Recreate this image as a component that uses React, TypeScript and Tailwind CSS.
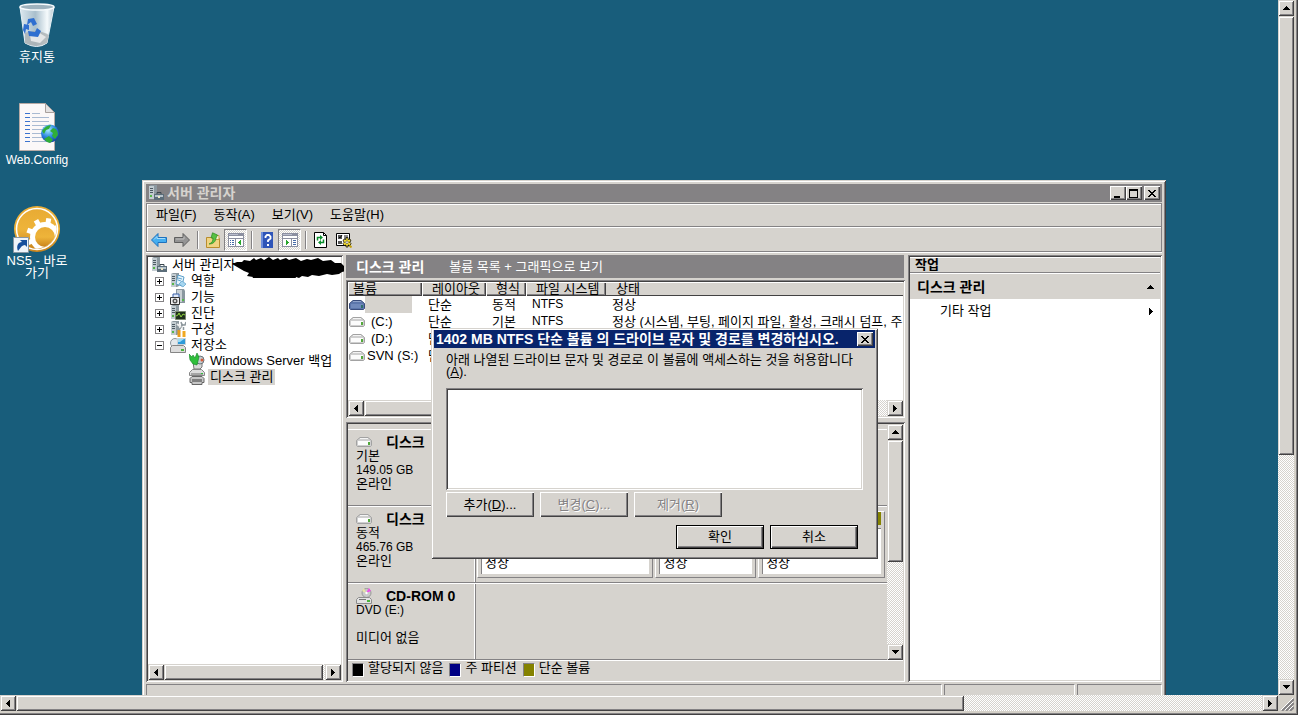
import type { ReactNode } from 'react';
import clsx from 'clsx';

const raised =
  'bg-[#d6d3ce] shadow-[inset_1px_1px_0_#d6d3ce,inset_-1px_-1px_0_#424142,inset_2px_2px_0_#fff,inset_-2px_-2px_0_#848284]';
const raisedButton =
  'bg-[#d6d3ce] shadow-[inset_1px_1px_0_#fff,inset_-1px_-1px_0_#424142,inset_-2px_-2px_0_#848284]';
const sunken =
  'p-[2px] shadow-[inset_1px_1px_0_#848284,inset_-1px_-1px_0_#fff,inset_2px_2px_0_#424142,inset_-2px_-2px_0_#d6d3ce]';
const dither =
  'bg-[repeating-conic-gradient(#fff_0_25%,#d6d3ce_0_50%)] bg-[length:2px_2px]';
const thinInset = 'border border-t-[#848284] border-l-[#848284] border-r-white border-b-white';

type Direction = 'up' | 'down' | 'left' | 'right';

const arrowPaths: Record<Direction, string> = {
  up: 'M3 0h1v1h1v1h1v1h1v1H0V3h1V2h1V1h1z',
  down: 'M0 0h7v1H6v1H5v1H4v1H3V3H2V2H1V1H0z',
  left: 'M4 0v7H3V6H2V5H1V4H0V3h1V2h1V1h1V0z',
  right: 'M0 0h1v1h1v1h1v1h1v1H3v1H2v1H1v1H0z'
};

const Arrow = ({ direction }: { direction: Direction }) => {
  const vertical = direction === 'up' || direction === 'down';
  return (
    <svg
      width={vertical ? 7 : 4}
      height={vertical ? 4 : 7}
      shapeRendering="crispEdges"
      aria-hidden="true"
    >
      <path d={arrowPaths[direction]} />
    </svg>
  );
};

const ScrollButton = ({ direction }: { direction: Direction }) => (
  <button
    type="button"
    aria-label={direction}
    className={clsx('flex size-4 shrink-0 items-center justify-center', raised)}
  >
    <Arrow direction={direction} />
  </button>
);

/* ---------- icons ---------- */

const Icon = ({ children, size = 16 }: { children: ReactNode; size?: number }) => (
  <svg width={size} height={size} viewBox="0 0 16 16" className="shrink-0" aria-hidden="true">
    {children}
  </svg>
);

const towerShape = (
  <>
    <path d="M1 1l2-1h6v13l-2 1H1z" fill="#8d99a0" />
    <path d="M1 1h5v13H1z" fill="#c3ccd1" />
    <path d="M2 3.500h3M2 5.500h3M2 7.500h3" stroke="#4d5a62" />
    <path d="M2 10h2v2H2z" fill="#55b848" />
  </>
);

const ServerIcon = () => (
  <Icon>
    {towerShape}
    <path d="M9 9.500v-2h4v2" fill="none" stroke="#39464e" />
    <path d="M6 9h10v6H6z" fill="#5b6d79" />
    <path d="M7 10h8v2H7z" fill="#b7c4cc" />
    <path d="M10 11h2v2h-2z" fill="#efe8c8" />
  </Icon>
);

const RolesIcon = () => (
  <Icon>
    {towerShape}
    <path d="M8 2l6 2-2 9-6-2z" fill="#e6f4fc" stroke="#5c9fc9" />
    <path d="M12 8l4 3-3 3-4-3z" fill="#a6d6f0" stroke="#5c9fc9" strokeWidth=".7" />
    <path d="M8 5l4 1M8 7l3 1" stroke="#62a5cf" />
  </Icon>
);

const FeaturesIcon = () => (
  <Icon>
    <path d="M6 0h8l1 2v12H6z" fill="#8a979f" />
    <path d="M7 1h5v12H7z" fill="#c9d0d4" />
    <path d="M3 5h6v6H3z" fill="#dfe9f8" stroke="#3860a8" />
    <path d="M.5 8.500h9v7h-9z" fill="#efefef" stroke="#333" />
    <circle cx="5" cy="12" r="2.500" fill="#555" />
    <circle cx="5" cy="12" r="1" fill="#fff" />
    <path d="M12 10h2v2h-2z" fill="#55b848" />
  </Icon>
);

const DiagnosticsIcon = () => (
  <Icon>
    {towerShape}
    <path d="M5.500 6.500h10v8h-10z" fill="#20301c" stroke="#7c8a70" />
    <path d="M6 11l2-1 1-2 2 4 2-3 2 1" fill="none" stroke="#8fd43c" />
  </Icon>
);

const ConfigIcon = () => (
  <Icon>
    {towerShape}
    <path d="M9 16V9" stroke="#e79a1c" strokeWidth="3" />
    <path d="M14 16v-6" stroke="#f0a821" strokeWidth="3" />
    <path d="M9 9L13 3M13.500 9V6" stroke="#8d979c" strokeWidth="1.500" />
    <path d="M11 1l1 3h3l1-3" fill="none" stroke="#8d979c" strokeWidth="1.500" />
    <path d="M7 3l4 3" stroke="#eee" strokeWidth="2" />
  </Icon>
);

const StorageIcon = () => (
  <Icon>
    <circle cx="5" cy="6" r="4.500" fill="#e4e8eb" stroke="#8a949b" />
    <path d="M7.500 1.500h8v6h-8z" fill="#2f9ad8" stroke="#c8d2d8" />
    <path d="M8 2h6l-4 3H8z" fill="#9adcf8" />
    <path d="M.5 10.500l2-2h11l2 2v5H.5z" fill="#dcdcdc" stroke="#858585" />
    <path d="M11 12h3v2h-3z" fill="#4bb53c" />
  </Icon>
);

const BackupIcon = () => (
  <Icon>
    <path d="M4 9h9v5l-2 2H5z" fill="#d9d9d9" stroke="#777" />
    <circle cx="11" cy="7" r="4" fill="#c4ccd0" stroke="#6b757b" />
    <circle cx="13" cy="7" r="1.500" fill="#d65a38" />
    <path d="M0 1l3 3 1-2 2 3 2-5 2 4-2 8-4-1-3-4z" fill="#2fbf3b" stroke="#128524" strokeWidth=".6" />
  </Icon>
);

const DiskMgmtIcon = () => (
  <Icon>
    <path d="M3.500.5h9l3 3v3H.5v-3z" fill="#dcdcdc" stroke="#858585" />
    <path d="M2 4h12v2H2z" fill="#a5a5a5" />
    <path d="M1 9.500l2-2h10l2 2v4h-2v2H3v-2H1z" fill="#c7c7c7" stroke="#666" />
    <path d="M3 10h10v3H3z" fill="#808080" />
    <path d="M12 4h2v1h-2z" fill="#2fbf3b" />
  </Icon>
);

const DriveIcon = ({ selected = false }: { selected?: boolean }) => (
  <svg width="16" height="10" viewBox="0 0 16 10" className="shrink-0" aria-hidden="true">
    <path
      d="M4 .5h8l3.500 3v5l-1 1h-13l-1-1v-5z"
      fill={selected ? '#5c76ab' : '#cfcfcf'}
      stroke={selected ? '#3a4d7d' : '#a2a2a2'}
    />
    <path d="M2 4h12v4H2z" fill={selected ? '#7089bb' : '#fcfcfc'} />
    <path d="M4 1.500h8" stroke={selected ? '#8fa3cb' : '#f4f4f4'} />
    <path d="M12 5h2v3h-2z" fill={selected ? '#2f6f6c' : '#52a83a'} />
  </svg>
);

const CdRomIcon = () => (
  <Icon>
    <circle cx="10.500" cy="5" r="4.500" fill="#c9c9c9" stroke="#999" />
    <path d="M10 5l3-5 2 3z" fill="#f04fe8" />
    <path d="M10 5L6 3l2-3z" fill="#e9e4a8" />
    <circle cx="10.500" cy="5" r="1.200" fill="#fff" />
    <path d="M.5 11.500l2-2h11l2 2v4H.5z" fill="#e2e2e2" stroke="#8c8c8c" />
    <path d="M3 11.500h7" stroke="#777" />
    <path d="M11 12h3v2h-3z" fill="#4bb53c" />
  </Icon>
);

const BackIcon = () => (
  <Icon>
    <path d="M.5 8L7 1.500v4h8.500v5H7v4z" fill="#45aef0" stroke="#1e71bd" />
    <path d="M3 7.500L6 4.500v2h8" fill="none" stroke="#a5dcfa" />
  </Icon>
);

const ForwardIcon = () => (
  <Icon>
    <path d="M15.500 8L9 1.500v4H.5v5H9v4z" fill="#949494" stroke="#5f5f5f" />
    <path d="M2 7h8V4.500" fill="none" stroke="#bdbdbd" />
  </Icon>
);

const FolderUpIcon = () => (
  <Icon>
    <path d="M1.500 5.500h5l1 1h7v9h-13z" fill="#f0d382" stroke="#b98d2d" />
    <path d="M9 3.500h5v4H9z" fill="#fbf2cf" stroke="#c9a24d" />
    <path d="M4 12c3-1 4-3 4-6H6L7.500.8l5 2.200L11 6c-.5 4-3 6-7 6z" fill="#58c044" stroke="#2b8a20" strokeWidth=".7" />
  </Icon>
);

const PaneIcon = ({ direction }: { direction: 'left' | 'right' }) => (
  <svg width="16" height="14" viewBox="0 0 16 14" shapeRendering="crispEdges" aria-hidden="true">
    <path d="M0 0h16v14H0z" fill="#8b8fa0" />
    <path d="M1 3h14v2H1zM1 6h14v7H1z" fill="#fff" />
    <path d="M1 1h9v1H1z" fill="#b9bdcd" />
    {direction === 'left' ? (
      <>
        <path d="M7 6h1v7H7z" fill="#8b8fa0" />
        <path d="M2 7h1v1H2zM4 7h2v1H4zM2 9h1v1H2zM4 9h2v1H4zM2 11h1v1H2zM4 11h2v1H4z" fill="#466ba8" />
        <path d="M13 7v5h-1v-1h-1v-1h-1V9h1V8h1V7z" fill="#28a52c" />
      </>
    ) : (
      <>
        <path d="M9 6h1v7H9z" fill="#8b8fa0" />
        <path d="M11 7h3v1h-3zM11 9h3v1h-3zM11 11h3v1h-3z" fill="#466ba8" />
        <path d="M4 7v5h1v-1h1v-1h1V9H6V8H5V7z" fill="#28a52c" />
      </>
    )}
  </svg>
);

const HelpIcon = () => (
  <Icon>
    <path d="M2 0h12v16H2z" fill="#2f55b8" />
    <path d="M2 0h2v16H2z" fill="#6d8ddb" />
    <path d="M6.500 6V4.500L8 3h2l1.500 1.500v2L9 8.500V10" fill="none" stroke="#fff" strokeWidth="1.800" />
    <path d="M8 12h2v2H8z" fill="#fff" />
  </Icon>
);

const RefreshIcon = () => (
  <Icon>
    <path d="M1.500.5h9l3 3v12h-12z" fill="#fff" stroke="#000" />
    <path d="M10.500.5v3h3" fill="none" stroke="#000" />
    <path d="M4.500 8.500v-3h3M10.500 7.500v3h-3" fill="none" stroke="#0a8f2c" strokeWidth="1.500" />
    <path d="M7 3l3 2.500L7 8zM8 8v5l-3-2.500z" fill="#0a8f2c" />
  </Icon>
);

const PropertiesIcon = () => (
  <Icon>
    <path d="M.5 1.500h13v12H.5z" fill="#fff" stroke="#000" />
    <path d="M2 3h4v4H2zM2 9h4v3H2z" fill="#555" />
    <path d="M3 5l1 1 2-3M8 4h4M8 6h4" fill="none" stroke="#111" />
    <path d="M10 5.500h2v2l2-.5 1 2-1.500 1L15 11.500l-1 2-2-.5v2h-2v-2l-2 .5-1-2L8.500 10 7 9l1-2 2 .5z" fill="#f4dc2e" stroke="#111" strokeWidth=".8" />
    <circle cx="11" cy="10.200" r="1.300" fill="#fff" stroke="#333" strokeWidth=".6" />
    <path d="M13.500 13.500l2 2" stroke="#c4a212" strokeWidth="2" />
  </Icon>
);

const RecycleBinIcon = () => (
  <svg width="48" height="48" viewBox="0 0 48 48" aria-hidden="true">
    <defs>
      <linearGradient id="bin" x1="0" x2="1">
        <stop offset="0" stopColor="#dce8ef" />
        <stop offset=".45" stopColor="#a9bfcc" />
        <stop offset=".8" stopColor="#f5fafc" />
        <stop offset="1" stopColor="#b6c8d2" />
      </linearGradient>
    </defs>
    <path d="M7 4l5 36q12 7 22 0l7-36z" fill="url(#bin)" stroke="#e8f2f7" />
    <path d="M12 30q12-5 24 2l-2 8q-11 6-22 0z" fill="#aab0b3" opacity=".8" />
    <path d="M17 32l8-3 8 5-6 6-9-2z" fill="#e4e6e7" />
    <ellipse cx="24" cy="4" rx="17" ry="3" fill="#9eb2be" stroke="#f7fbfd" strokeWidth="1.500" />
    <path d="M15 16l6-1 3 6-4 2-2-4-4 3zM11 21l5 1v5l-3-1-1 5-2-4zM15 28l7 1 2-4 4 3-3 6-9-1z" fill="#2f6fd0" />
  </svg>
);

const ConfigFileIcon = () => (
  <svg width="48" height="48" viewBox="0 1 48 48" className="overflow-visible" aria-hidden="true">
    <defs>
      <radialGradient id="globe" cx=".4" cy=".3" r=".8">
        <stop offset="0" stopColor="#a8ecff" />
        <stop offset=".5" stopColor="#2c86e0" />
        <stop offset="1" stopColor="#0c2d90" />
      </radialGradient>
    </defs>
    <path d="M6.500-.5h26l9 9v38h-35z" fill="#fbf8f8" stroke="#b7aaa5" />
    <path d="M32.500-.5v9h9z" fill="#e4e2e2" stroke="#a9a09c" />
    <path d="M19 9.500h8M19 13.500h17M19 17.500h17M19 21.500h17M19 25.500h11M19 29.500h11M19 33.500h11M19 37.500h14" stroke="#a9bad2" />
    <path d="M12 9.500h5M12 13.500h5M12 17.500h5M12 21.500h5M12 25.500h5M12 29.500h5M12 33.500h5M12 37.500h5" stroke="#3b73cf" />
    <circle cx="37" cy="29.500" r="9" fill="url(#globe)" />
    <path d="M29 27q4-6 9-6l-2 4-3 1-2 4zM40 24q5 1 5 7l-3 4-3-3 1-3-3-2zM31 35l5-3 4 4-3 3q-4-1-6-4z" fill="#2fae38" />
  </svg>
);

const gearTeeth = [0, 40, 80, 120, 160, 200, 240, 280, 320];

const GearAppIcon = () => (
  <svg width="48" height="48" viewBox="0 1 48 48" className="overflow-visible" aria-hidden="true">
    <defs>
      <linearGradient id="gold" x1="0" y1="0" x2="0" y2="1">
        <stop offset="0" stopColor="#e8ab34" />
        <stop offset=".5" stopColor="#eeb43a" />
        <stop offset="1" stopColor="#c9831c" />
      </linearGradient>
      <clipPath id="disc">
        <circle cx="24" cy="23" r="19.500" />
      </clipPath>
    </defs>
    <circle cx="24" cy="23" r="23" fill="url(#gold)" />
    <circle cx="24" cy="23" r="20.500" fill="url(#gold)" stroke="#fff" strokeWidth="1.500" />
    <g clipPath="url(#disc)">
      <circle cx="32" cy="31" r="15" fill="#fff" />
      {gearTeeth.map((angle) => (
        <path key={angle} d="M30 12h5v6h-5z" fill="#fff" transform={`rotate(${angle + 10} 32 31)`} />
      ))}
      <circle cx="32" cy="31" r="10" fill="url(#gold)" />
    </g>
    <path d="M.5 31.500h15v15H.5z" fill="#eef4fa" stroke="#8796a3" />
    <path d="M5 45c-2-5 0-9 4-9L7 34h7v7l-2-2c-3 0-4 2-7 6z" fill="#164f9c" />
  </svg>
);

/* ---------- data ---------- */

const shortcuts = [
  { label: '휴지통', icon: <RecycleBinIcon />, small: false },
  { label: 'Web.Config', icon: <ConfigFileIcon />, small: true },
  { label: 'NS5 - 바로 가기', icon: <GearAppIcon />, small: false }
];

const menus = ['파일(F)', '동작(A)', '보기(V)', '도움말(H)'];

const treeNodes = [
  { label: '역할', icon: <RolesIcon />, open: false },
  { label: '기능', icon: <FeaturesIcon />, open: false },
  { label: '진단', icon: <DiagnosticsIcon />, open: false },
  { label: '구성', icon: <ConfigIcon />, open: false },
  { label: '저장소', icon: <StorageIcon />, open: true }
];

const columns = ['볼륨', '레이아웃', '형식', '파일 시스템', '상태'];

const volumes = [
  { name: '', layout: '단순', type: '동적', fs: 'NTFS', status: '정상' },
  {
    name: '(C:)',
    layout: '단순',
    type: '기본',
    fs: 'NTFS',
    status: '정상 (시스템, 부팅, 페이지 파일, 활성, 크래시 덤프, 주'
  },
  { name: '(D:)', layout: '단순', type: '', fs: '', status: '' },
  { name: 'SVN (S:)', layout: '단순', type: '', fs: '', status: '' }
];

const disks = [
  { id: 0, title: '디스크', lines: ['기본', '149.05 GB', '온라인'], parts: false, cd: false },
  { id: 1, title: '디스크', lines: ['동적', '465.76 GB', '온라인'], parts: true, cd: false },
  { id: 2, title: 'CD-ROM 0', lines: ['DVD (E:)', '', '미디어 없음'], parts: false, cd: true }
];

/* ---------- window pieces ---------- */

const CaptionButton = ({ label, children }: { label: string; children: ReactNode }) => (
  <button
    type="button"
    aria-label={label}
    className={clsx('flex h-[14px] w-4 items-center justify-center', raisedButton)}
  >
    <svg width="10" height="9" viewBox="0 0 10 9" shapeRendering="crispEdges" aria-hidden="true">
      {children}
    </svg>
  </button>
);

const closeGlyph = (
  <path d="M1 1h2v1h1v1h2V2h1V1h2v1H8v1H7v1H6v1h1v1h1v1h1v1H7V7H6V6H4v1H3v1H1V7h1V6h1V5h1V4H3V3H2V2H1z" />
);

const ToolSeparator = () => (
  <div className="mr-[2px] ml-1 h-[18px] w-[2px] border-l border-[#848284] bg-white" />
);

const ToolButton = ({ label, pressed, children }: { label: string; pressed?: boolean; children: ReactNode }) => (
  <button
    type="button"
    aria-label={label}
    className={clsx(
      'flex h-[22px] w-[23px] items-center justify-center',
      pressed && [dither, thinInset]
    )}
  >
    {children}
  </button>
);

const Toolbar = () => (
  <div className="flex h-[24px] items-center border-t border-white">
    <ToolButton label="뒤로"><BackIcon /></ToolButton>
    <ToolButton label="앞으로"><ForwardIcon /></ToolButton>
    <ToolSeparator />
    <ToolButton label="위로"><FolderUpIcon /></ToolButton>
    <ToolButton label="콘솔 트리" pressed><PaneIcon direction="left" /></ToolButton>
    <ToolSeparator />
    <ToolButton label="도움말"><HelpIcon /></ToolButton>
    <ToolButton label="작업 창" pressed><PaneIcon direction="right" /></ToolButton>
    <ToolSeparator />
    <ToolButton label="새로 고침"><RefreshIcon /></ToolButton>
    <ToolButton label="설정"><PropertiesIcon /></ToolButton>
  </div>
);

const TreePane = () => (
  <nav className={clsx('mr-px flex w-[197px] shrink-0 flex-col', sunken)}>
    <ul className="relative flex-1 bg-white leading-4">
      <li>
        <div className="flex h-4 items-center gap-[5px] pl-[3px]">
          <ServerIcon />
          <span>서버 관리자</span>
        </div>
        <svg width="113" height="22" viewBox="0 0 113 22" className="absolute top-[-1px] right-[-3px]" aria-hidden="true">
          <path d="M1 8l5-2 5 0 2-2 6 1 4-3 2 2 5-2 3 2 5-3 4 3 5-2 2 2 6-2 3 2 7-2 5 3 6-2 4 1 7-2 5 3 8-1 4 3 6 0 3 3 4 2-1 3-5 1-3 2-7 1-5-1-8 2-7-1-4 2-6-1-3 2-3-1-1 3-4-2-3 4-5-2-3 3-4-2-5 2-4-2-6 2-4-3-6 1 2-4-6-1 2-3-5-2z" />
        </svg>
        <ul>
          {treeNodes.map((node) => (
            <li key={node.label} className="flex h-4 items-center pl-[7px]">
              <svg width="9" height="9" shapeRendering="crispEdges" aria-hidden="true">
                <path d="M0 0h9v9H0z" fill="#848284" />
                <path d="M1 1h7v7H1z" fill="#fff" />
                <path d={node.open ? 'M2 4h5v1H2z' : 'M2 4h5v1H2zM4 2h1v5H4z'} />
              </svg>
              <span className="mr-[5px] ml-[6px] flex">{node.icon}</span>
              <span>{node.label}</span>
            </li>
          ))}
          <li className="flex h-4 items-center pl-[41px]">
            <BackupIcon />
            <span className="ml-[5px] whitespace-nowrap">Windows Server 백업</span>
          </li>
          <li className="flex h-4 items-center pl-[41px]">
            <DiskMgmtIcon />
            <span className="ml-[3px] bg-[#d6d3ce] px-[2px]">디스크 관리</span>
          </li>
        </ul>
      </li>
    </ul>
    <div className={clsx('flex', dither)}>
      <ScrollButton direction="left" />
      <div className={clsx('mr-[2px] flex-1', raised)} />
      <ScrollButton direction="right" />
    </div>
  </nav>
);

const VolumeList = () => (
  <div className={clsx('flex h-[138px] shrink-0 flex-col', sunken)}>
    <div className="flex-1 overflow-hidden bg-white">
      <table className="w-full table-fixed text-left">
        <colgroup>
          <col className="w-[74px]" />
          <col className="w-[64px]" />
          <col className="w-[40px]" />
          <col className="w-[80px]" />
          <col />
        </colgroup>
        <thead>
          <tr className="h-[14px] leading-[14px]">
            {columns.map((column, i) => (
              <th
                key={column}
                className={clsx(
                  'whitespace-nowrap p-0 font-normal',
                  i === 0 ? 'pl-[5px]' : 'pl-[10px]',
                  i < 4 ? raisedButton : 'bg-[#d6d3ce] shadow-[inset_0_1px_0_#fff,inset_0_-1px_0_#424142]'
                )}
              >
                {column}
              </th>
            ))}
          </tr>
        </thead>
        <tbody>
          {volumes.map((volume, i) => (
            <tr key={volume.name} className="h-[17px] leading-[17px]">
              <td className="p-0">
                <div className="flex items-center pl-px">
                  <DriveIcon selected={i === 0} />
                  {i === 0 ? (
                    <span className="h-[17px] w-[47px] bg-[#d6d3ce]" />
                  ) : (
                    <span className={clsx('whitespace-nowrap', i === 3 ? 'ml-[2px]' : 'ml-[6px]')}>
                      {volume.name}
                    </span>
                  )}
                </div>
              </td>
              <td className="p-0 pl-[6px]">{volume.layout}</td>
              <td className="p-0 pl-[6px]">{volume.type}</td>
              <td className="p-0 pl-[6px] text-xs leading-[17px]">{volume.fs}</td>
              <td className="overflow-hidden whitespace-nowrap p-0 pl-[6px]">{volume.status}</td>
            </tr>
          ))}
        </tbody>
      </table>
    </div>
    <div className={clsx('flex', dither)}>
      <ScrollButton direction="left" />
      <div className={clsx('w-[400px]', raised)} />
      <div className="flex-1" />
      <ScrollButton direction="right" />
    </div>
  </div>
);

const Partition = ({ className }: { className: string }) => (
  <div
    className={clsx(
      'flex flex-col border border-t-white border-l-white border-r-[#848284] border-b-[#848284] px-[3px] pb-[3px]',
      className
    )}
  >
    <div className="h-[13px] bg-[#848200]" />
    <div className="mt-[3px] flex flex-1 flex-col justify-end border-t border-l border-[#848284] bg-white pb-1 pl-[3px] leading-[14px]">
      정상
    </div>
  </div>
);

const Swatch = ({ className }: { className: string }) => (
  <span className={clsx('mt-[2px] mr-1 h-[14px] w-3', thinInset, className)} />
);

const DiskGraph = () => (
  <div className={clsx('flex min-h-0 flex-1 flex-col', sunken)}>
    <div className="flex">
      <div className="flex-1 pt-[5px]">
        {disks.map((disk) => (
          <div key={disk.id} className="flex h-[77px] border-t border-b border-t-white border-b-[#848284]">
            <div className="w-[127px] border-r border-white pt-[5px] pl-2 leading-[14px]">
              <div className="flex h-[14px] items-center gap-[14px]">
                {disk.cd ? <CdRomIcon /> : <DriveIcon />}
                <h3 className="text-sm leading-[14px] font-bold whitespace-nowrap">{disk.title}</h3>
              </div>
              {disk.lines.map((line, i) => (
                <p key={i} className={clsx('h-[14px]', /[A-Z]/.test(line) && 'text-xs leading-[14px]')}>
                  {line}
                </p>
              ))}
            </div>
            <div className="flex flex-1 gap-[2px] border-l border-[#848284] pt-1 pr-[2px] pb-1 pl-px">
              {disk.parts && (
                <>
                  <Partition className="flex-[180]" />
                  <Partition className="flex-[99]" />
                  <Partition className="flex-[127]" />
                </>
              )}
            </div>
          </div>
        ))}
      </div>
      <div className={clsx('flex w-4 flex-col', dither)}>
        <ScrollButton direction="up" />
        <div className={clsx('h-[122px]', raised)} />
        <div className="flex-1" />
        <ScrollButton direction="down" />
      </div>
    </div>
    <div className="flex flex-1 items-start border-t border-white pl-1 leading-[14px]">
      <Swatch className="bg-black" />
      <span>할당되지 않음</span>
      <Swatch className="ml-[6px] bg-[#000084]" />
      <span>주 파티션</span>
      <Swatch className="ml-[6px] bg-[#848200]" />
      <span>단순 볼륨</span>
    </div>
  </div>
);

const ActionsPane = () => (
  <aside className={clsx('flex w-[254px] shrink-0 flex-col bg-white', sunken)}>
    <h2 className="h-4 border-t border-b border-t-white border-b-[#848284] bg-[#d6d3ce] pl-[5px] leading-[14px] font-bold">
      작업
    </h2>
    <div className="mt-px flex h-[25px] items-center justify-between bg-[#d6d3ce] pr-[6px] pl-[7px] text-sm font-bold">
      디스크 관리
      <Arrow direction="up" />
    </div>
    <button type="button" className="flex h-6 items-center justify-between pr-[7px] pl-[30px]">
      기타 작업
      <Arrow direction="right" />
    </button>
  </aside>
);

const ServerManager = () => (
  <section className={clsx('absolute top-[180px] right-[112px] bottom-[-12px] left-[142px] flex flex-col p-1', raised)}>
    <header className="flex h-[18px] shrink-0 items-center bg-[#848284] pr-[2px] pl-[2px] text-[#d6d3ce]">
      <ServerIcon />
      <h1 className="ml-[3px] flex-1 text-sm leading-[18px] font-bold">서버 관리자</h1>
      <CaptionButton label="최소화"><path d="M1 7h6v2H1z" /></CaptionButton>
      <CaptionButton label="최대화"><path d="M0 0h9v9H0V2h1v6h7V2H0z" /></CaptionButton>
      <div className="w-[2px]" />
      <CaptionButton label="닫기">{closeGlyph}</CaptionButton>
    </header>
    <div className="mt-px mb-[3px] shrink-0 border border-[#848284] shadow-[0_1px_0_#fff,inset_1px_1px_0_#fff]">
      <div className="flex h-[22px] items-center gap-[17px] pl-[9px]">
        {menus.map((menu) => (
          <button key={menu} type="button">{menu}</button>
        ))}
      </div>
      <div className="border-t border-[#848284]">
        <Toolbar />
      </div>
    </div>
    <div className="flex min-h-0 flex-1 gap-[2px]">
      <TreePane />
      <main className="flex min-w-0 flex-1 flex-col pr-px">
        <div className="mr-px mb-[2px] flex h-[23px] shrink-0 items-center gap-[25px] bg-[#848284] pl-[10px] text-white">
          <h2 className="text-sm font-bold">디스크 관리</h2>
          <span>볼륨 목록 + 그래픽으로 보기</span>
        </div>
        <VolumeList />
        <div className="h-1 shrink-0" />
        <DiskGraph />
      </main>
      <ActionsPane />
    </div>
    <footer className="mt-[2px] flex h-[19px] shrink-0 gap-[2px]">
      <div className={clsx('flex-1', thinInset)} />
      <div className={clsx('w-[131px]', thinInset)} />
      <div className={clsx('w-[85px]', thinInset)} />
    </footer>
  </section>
);

const PushButton = ({ children, disabled, framed }: { children: ReactNode; disabled?: boolean; framed?: boolean }) => (
  <button
    type="button"
    disabled={disabled}
    className={clsx(
      'flex w-[88px] items-center justify-center',
      raisedButton,
      framed ? 'h-6 border border-black' : 'h-[25px]',
      disabled && 'text-[#848284] [text-shadow:1px_1px_0_#fff]'
    )}
  >
    <span>{children}</span>
  </button>
);

const DrivePathDialog = () => (
  <section role="dialog" className={clsx('absolute top-[328px] left-[431px] w-[447px] px-[3px] pt-[2px] pb-[10px]', raised)}>
    <header className="flex h-[18px] items-center bg-[#08246b] pr-[2px] pl-[2px] text-white">
      <h2 className="flex-1 text-sm leading-[18px] font-bold whitespace-nowrap">
        1402 MB NTFS 단순 볼륨 의 드라이브 문자 및 경로를 변경하십시오.
      </h2>
      <CaptionButton label="닫기">{closeGlyph}</CaptionButton>
    </header>
    <div className="px-3 pt-[6px]">
      <label htmlFor="paths" className="block h-[34px] leading-[12px]">
        아래 나열된 드라이브 문자 및 경로로 이 볼륨에 액세스하는 것을 허용합니다
        <br />
        (<u>A</u>).
      </label>
      <select id="paths" size={5} className={clsx('block h-[102px] w-[417px] appearance-none overflow-hidden bg-white', sunken)} />
      <div className="mt-[2px] flex gap-[6px]">
        <PushButton>추가(<u>D</u>)...</PushButton>
        <PushButton disabled>변경(<u>C</u>)...</PushButton>
        <PushButton disabled>제거(<u>R</u>)</PushButton>
      </div>
      <div className="mt-2 flex justify-end gap-[6px] pr-[5px]">
        <PushButton framed>확인</PushButton>
        <PushButton framed>취소</PushButton>
      </div>
    </div>
  </section>
);

const Desktop = () => (
  <div className="relative flex-1 overflow-hidden bg-[#185d7b]">
    <ul className="w-[74px]">
      {shortcuts.map((shortcut) => (
        <li key={shortcut.label} className="flex h-[102px] flex-col items-center pt-[3px] text-center leading-[12px] text-white">
          {shortcut.icon}
          <span className={clsx(shortcut.small && 'text-xs leading-[14px]')}>{shortcut.label}</span>
        </li>
      ))}
    </ul>
    <ServerManager />
    <DrivePathDialog />
  </div>
);

export default function App() {
  return (
    <div className="h-screen bg-white pr-px pb-px font-['Liberation_Sans','Noto_Sans_CJK_KR',sans-serif] text-[13px] text-black">
      <div className="flex h-full flex-col border-r border-b border-[#424142] bg-[#d4d0c8]">
        <div className="flex min-h-0 flex-1 flex-col border-r border-b border-[#848284] pr-[2px] pb-[2px]">
          <div className="flex min-h-0 flex-1">
            <Desktop />
            <div className={clsx('flex w-4 flex-col', dither)}>
              <ScrollButton direction="up" />
              <div className={clsx('h-[439px]', raised)} />
              <div className="flex-1" />
              <ScrollButton direction="down" />
            </div>
          </div>
          <div className="flex h-4 shrink-0">
            <div className={clsx('flex flex-1', dither)}>
              <ScrollButton direction="left" />
              <div className={clsx('w-[948px]', raised)} />
              <div className="flex-1" />
              <ScrollButton direction="right" />
            </div>
            <svg width="16" height="16" aria-hidden="true">
              <path d="M4 16L16 4M8 16l8-8M12 16l4-4" stroke="#848284" strokeWidth="2" />
              <path d="M3 15L15 3M7 15l8-8M11 15l4-4" stroke="#fff" />
            </svg>
          </div>
        </div>
      </div>
    </div>
  );
}
